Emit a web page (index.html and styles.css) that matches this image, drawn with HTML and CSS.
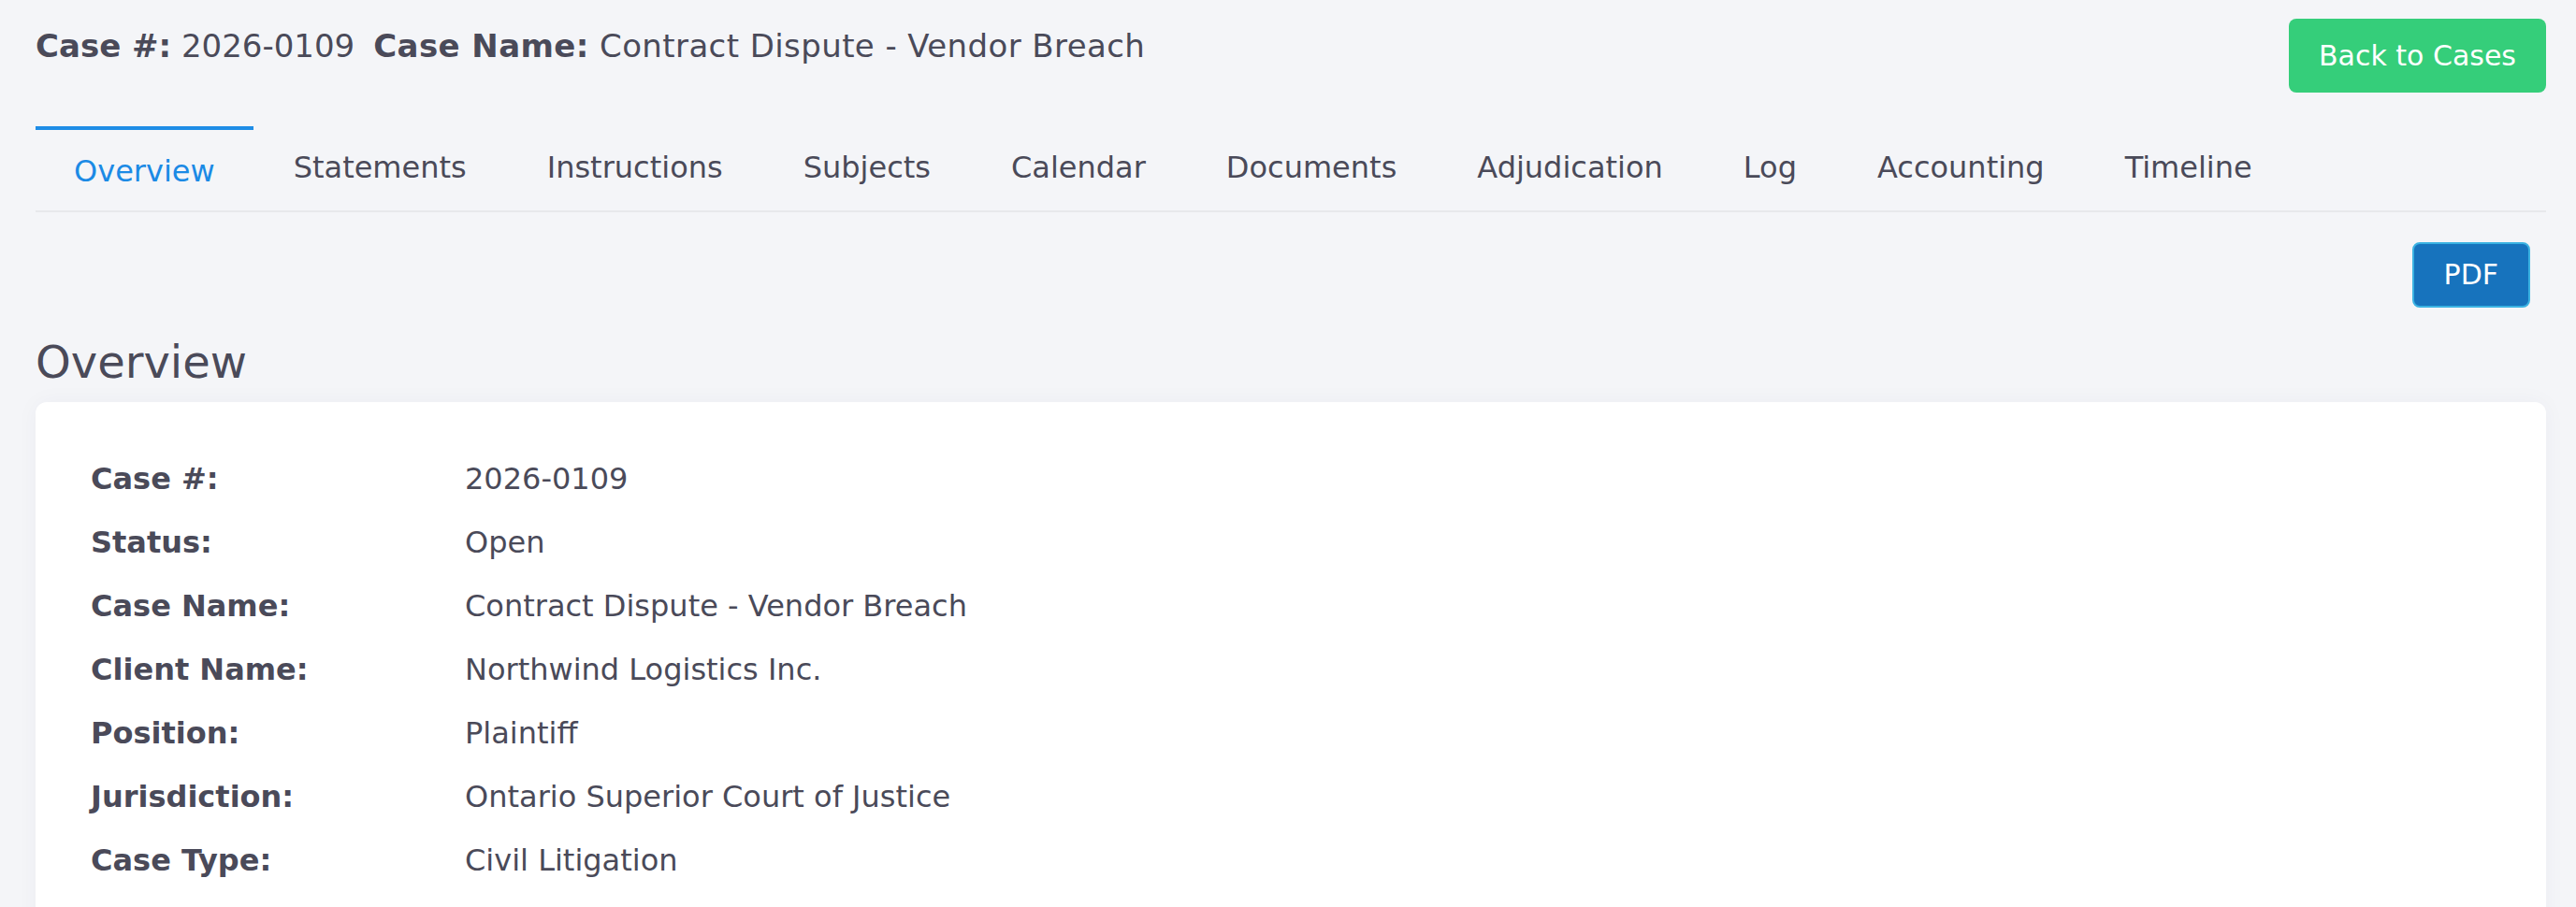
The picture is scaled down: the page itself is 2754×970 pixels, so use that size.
FILE: index.html
```html
<!DOCTYPE html>
<html lang="en">
<head>
    <meta charset="UTF-8">
    <meta name="viewport" content="width=device-width, initial-scale=1.0">
    <title>Case 2026-0109 - Overview</title>
    <link rel="stylesheet" href="styles.css">
</head>
<body>
    <div class="page">
        <!-- Case header with back button -->
        <div class="case-header">
            <h1 class="case-title">
                <span class="case-field"><strong>Case #:</strong> 2026-0109</span>
                <span class="case-field"><strong>Case Name:</strong> Contract Dispute - Vendor Breach</span>
            </h1>
            <button class="btn btn-back">Back to Cases</button>
        </div>

        <!-- Section tabs -->
        <nav class="tabs">
            <a class="tab active" href="#">Overview</a>
            <a class="tab" href="#">Statements</a>
            <a class="tab" href="#">Instructions</a>
            <a class="tab" href="#">Subjects</a>
            <a class="tab" href="#">Calendar</a>
            <a class="tab" href="#">Documents</a>
            <a class="tab" href="#">Adjudication</a>
            <a class="tab" href="#">Log</a>
            <a class="tab" href="#">Accounting</a>
            <a class="tab" href="#">Timeline</a>
        </nav>

        <div class="toolbar">
            <button class="btn btn-pdf">PDF</button>
        </div>

        <h2 class="section-title">Overview</h2>

        <div class="card">
            <dl class="details">
                <dt>Case #:</dt>
                <dd>2026-0109</dd>
                <dt>Status:</dt>
                <dd>Open</dd>
                <dt>Case Name:</dt>
                <dd>Contract Dispute - Vendor Breach</dd>
                <dt>Client Name:</dt>
                <dd>Northwind Logistics Inc.</dd>
                <dt>Position:</dt>
                <dd>Plaintiff</dd>
                <dt>Jurisdiction:</dt>
                <dd>Ontario Superior Court of Justice</dd>
                <dt>Case Type:</dt>
                <dd>Civil Litigation</dd>
            </dl>
        </div>
    </div>
</body>
</html>
```

FILE: styles.css
```css
/* General styles */
body {
    font-family: "DejaVu Sans", "Liberation Sans", sans-serif;
    background-color: #f4f5f8;
    color: #4a4a59;
    margin: 0;
}

.page {
    padding: 0 32px 0 38px;
}

/* Header */
.case-header {
    display: flex;
    justify-content: space-between;
    align-items: flex-start;
    padding-top: 20px;
}

.case-title {
    margin: 2px 0 0;
    font-size: 34px;
    line-height: 54px;
    font-weight: normal;
    display: flex;
    gap: 20px;
}

.case-field:last-child {
    letter-spacing: 0.4px;
}

.case-field strong {
    font-weight: bold;
}

.btn {
    font-family: inherit;
    color: #ffffff;
    cursor: pointer;
    border-radius: 8px;
}

.btn-back {
    background-color: #35ce7a;
    border: none;
    font-size: 30px;
    height: 79px;
    padding: 0 32px;
}

/* Tabs */
.tabs {
    display: flex;
    align-items: flex-start;
    margin-top: 36px;
    border-bottom: 2px solid #e7e8eb;
}

.tab {
    font-size: 32px;
    line-height: 48px;
    padding: 20px 43px 18px;
    color: #4a4a59;
    text-decoration: none;
}

.tab.active {
    color: #1b8ae5;
    border-top: 4px solid #1e8de6;
    padding-left: 41px;
    padding-right: 41px;
}

/* PDF toolbar */
.toolbar {
    display: flex;
    justify-content: flex-end;
    padding: 32px 17px 0 0;
}

.btn-pdf {
    background-color: #1773bd;
    border: 2px solid #3ab2e2;
    font-size: 30px;
    line-height: 42px;
    padding: 12px 32px;
}

.section-title {
    font-size: 48px;
    line-height: 58px;
    font-weight: normal;
    margin: 29px 0 14px;
}

/* Details card */
.card {
    background-color: #ffffff;
    border-radius: 12px;
    box-shadow: 0 0 24px rgba(40, 50, 90, 0.04);
    padding: 48px 59px;
}

.details {
    display: grid;
    grid-template-columns: 400px 1fr;
    margin: 0;
    font-size: 32px;
    line-height: 48px;
}

.details dt,
.details dd {
    margin: 0;
    padding: 10px 0;
}

.details dt {
    font-weight: bold;
}
```
